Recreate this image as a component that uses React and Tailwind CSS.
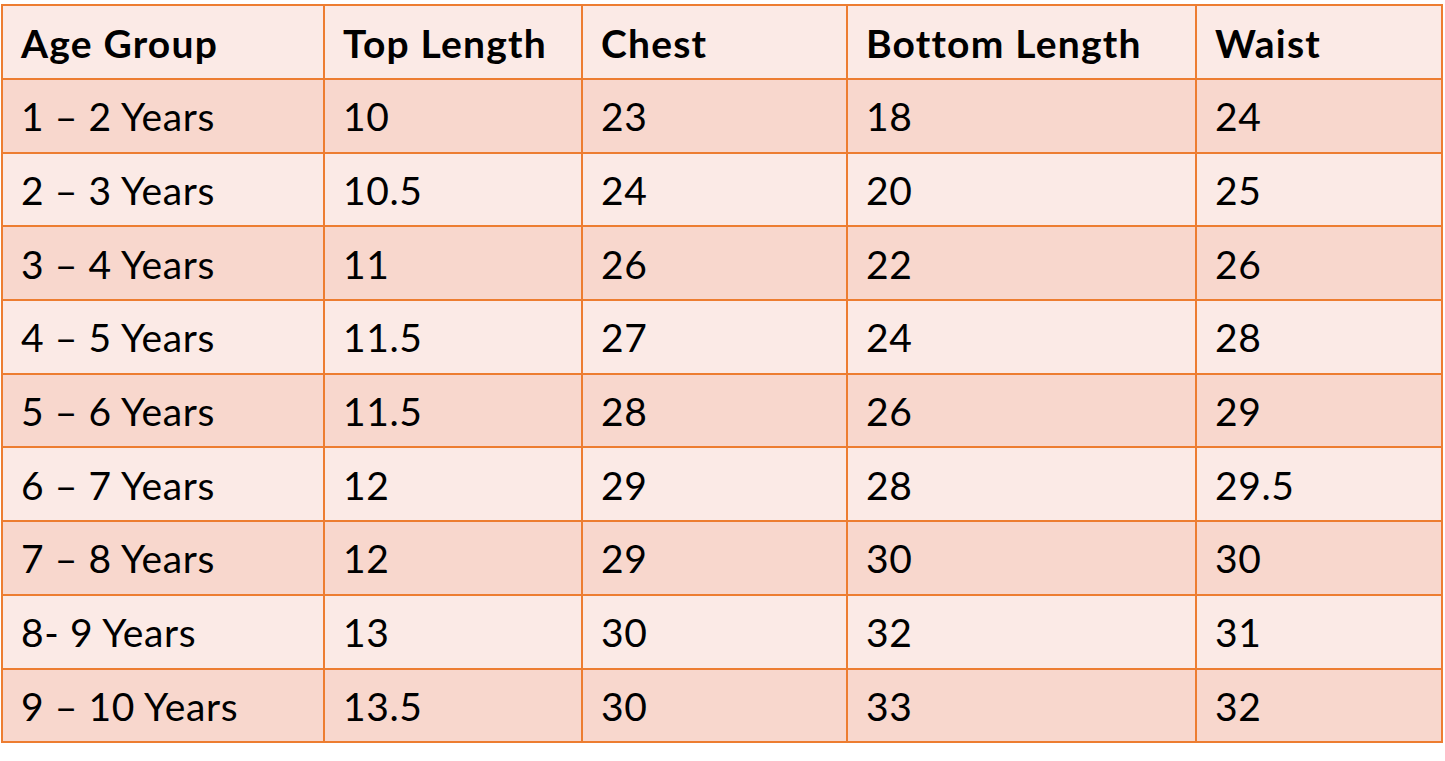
const headers = ["Age Group", "Top Length", "Chest", "Bottom Length", "Waist"];

const rows = [
  ["1 – 2 Years", "10", "23", "18", "24"],
  ["2 – 3 Years", "10.5", "24", "20", "25"],
  ["3 – 4 Years", "11", "26", "22", "26"],
  ["4 – 5 Years", "11.5", "27", "24", "28"],
  ["5 – 6 Years", "11.5", "28", "26", "29"],
  ["6 – 7 Years", "12", "29", "28", "29.5"],
  ["7 – 8 Years", "12", "29", "30", "30"],
  ["8- 9 Years", "13", "30", "32", "31"],
  ["9 – 10 Years", "13.5", "30", "33", "32"],
];

const App = () => {
  return (
    <div className="bg-white w-[1445px] h-[761px] pt-[4px] pl-[1px] font-['Lato',sans-serif] text-black">
      <table className="table-fixed border-collapse w-[1442px]">
        <colgroup>
          <col className="w-[322px]" />
          <col className="w-[258px]" />
          <col className="w-[265px]" />
          <col className="w-[349px]" />
          <col className="w-[246px]" />
        </colgroup>

        <thead>
          <tr className="h-[74px] bg-[#FBEAE6]">
            {headers.map((h) => (
              <th
                key={h}
                className="border-2 border-[#ED7D31] pl-[18px] pt-[2px] text-left font-bold text-[39px] leading-none tracking-[1.2px]"
              >
                {h}
              </th>
            ))}
          </tr>
        </thead>

        <tbody>
          {rows.map((row, i) => (
            <tr
              key={i}
              className={i % 2 === 0 ? "h-[73.7px] bg-[#F8D7CD]" : "h-[73.7px] bg-[#FBEAE6]"}
            >
              {row.map((cell, j) => (
                <td
                  key={j}
                  className="border-2 border-[#ED7D31] pl-[18px] pt-[2px] text-[39px] leading-none tracking-[0.6px]"
                >
                  {cell}
                </td>
              ))}
            </tr>
          ))}
        </tbody>
      </table>
    </div>
  );
};

export default App;
